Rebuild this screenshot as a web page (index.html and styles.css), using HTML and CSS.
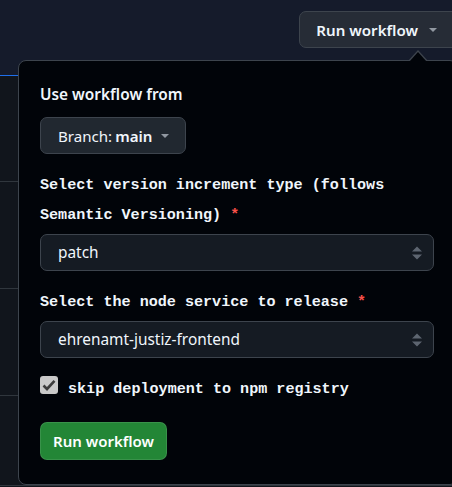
FILE: index.html
```html
<!DOCTYPE html>
<html lang="en">
<head>
<meta charset="utf-8">
<title>Run workflow</title>
<link rel="stylesheet" href="styles.css">
</head>
<body>
<div class="page">
  <header class="topbar">
    <button class="btn-top" type="button">Run workflow<span class="caret"></span></button>
  </header>
  <div class="rows">
    <div class="row r1"></div>
    <div class="row r2"></div>
    <div class="row r3"></div>
    <div class="row r4"></div>
  </div>

  <div class="popover">
    <span class="arrow"></span>
    <div class="title">Use workflow from</div>
    <button class="btn-branch" type="button">Branch:<b>main</b><span class="caret"></span></button>

    <div class="label l1">Select version increment type (follows<br>Semantic Versioning) <span class="req">*</span></div>
    <div class="select">
      <span>patch</span>
      <svg class="updown" width="12" height="14" viewBox="0 0 12 14"><path d="M6 0.5 L11 5.5 H1 Z M6 13.5 L11 8.5 H1 Z" fill="#5d6570"/></svg>
    </div>

    <div class="label l2">Select the node service to release <span class="req">*</span></div>
    <div class="select">
      <span>ehrenamt-justiz-frontend</span>
      <svg class="updown" width="12" height="14" viewBox="0 0 12 14"><path d="M6 0.5 L11 5.5 H1 Z M6 13.5 L11 8.5 H1 Z" fill="#5d6570"/></svg>
    </div>

    <div class="check-row">
      <span class="checkbox"><svg width="14" height="12" viewBox="0 0 14 12"><path d="M1.5 6.5 L5 10 L12.5 1.8" fill="none" stroke="#3b3b3b" stroke-width="2.6"/></svg></span>
      <span class="label">skip deployment to npm registry</span>
    </div>

    <button class="btn-green" type="button">Run workflow</button>
  </div>
</div>
</body>
</html>
```

FILE: styles.css
```css
* { box-sizing: border-box; }
html, body { margin: 0; padding: 0; }
body {
  width: 452px;
  height: 487px;
  overflow: hidden;
  background: #11151c;
  font-family: "Noto Sans", "Open Sans", sans-serif;
  color: #f0f6fc;
}
.page {
  position: relative;
  width: 452px;
  height: 487px;
  overflow: hidden;
}
.topbar {
  height: 76px;
  background: #151b2b;
  border-bottom: 1px solid #1f6feb;
  display: flex;
  justify-content: flex-end;
  align-items: flex-start;
  padding-top: 11px;
}
.btn-top {
  height: 37px;
  margin-right: -8px;
  padding: 0 22px 0 16px;
  background: #262c36;
  border: 1px solid #3d444d;
  border-radius: 7px;
  color: #f0f6fc;
  font-family: inherit;
  font-size: 15.1px;
  font-weight: 600;
  display: flex;
  align-items: center;
}
.caret {
  display: inline-block;
  width: 0;
  height: 0;
  border-left: 4.5px solid transparent;
  border-right: 4.5px solid transparent;
  border-top: 4.5px solid #9198a1;
  margin-left: 11px;
}
.rows { display: flex; flex-direction: column; }
.row { border-bottom: 1px solid #30363d; }
.r1 { height: 106px; }
.r2 { height: 107px; }
.r3 { height: 107px; }
.r4 { height: 90px; }

.popover {
  position: absolute;
  left: 18px;
  top: 60px;
  width: 440px;
  height: 425px;
  background: #010409;
  border: 1px solid #3d444d;
  border-radius: 8px;
  padding: 23px 22px 0 21px;
  display: flex;
  flex-direction: column;
  align-items: flex-start;
}
.arrow {
  position: absolute;
  top: -11px;
  left: 389px;
  width: 0;
  height: 0;
  border-left: 10px solid transparent;
  border-right: 10px solid transparent;
  border-bottom: 11px solid #3d444d;
}
.arrow::after {
  content: "";
  position: absolute;
  left: -9px;
  top: 1.5px;
  border-left: 9px solid transparent;
  border-right: 9px solid transparent;
  border-bottom: 10px solid #010409;
}
.title {
  font-size: 15.4px;
  font-weight: 600;
  line-height: 21px;
}
.btn-branch {
  margin-top: 12px;
  height: 37px;
  padding: 0 16px 0 17px;
  background: #212830;
  border: 1px solid #3d444d;
  border-radius: 7px;
  color: #f0f6fc;
  font-family: inherit;
  font-size: 15.1px;
  font-weight: 400;
  display: flex;
  align-items: center;
}
.btn-branch b { font-weight: 600; margin-left: 3px; }
.btn-branch .caret { margin-left: 9px; }
.label {
  font-family: "Liberation Mono", "DejaVu Sans Mono", monospace;
  font-weight: 700;
  font-size: 15.1px;
  line-height: 30px;
  color: #f0f6fc;
}
.l1 { margin-top: 16px; }
.l2 { margin-top: 16px; }
.req { color: #f85149; }
.select {
  margin-top: 4px;
  width: 394px;
  height: 37px;
  background: #151b23;
  border: 1px solid #3d444d;
  border-radius: 7px;
  display: flex;
  align-items: center;
  justify-content: space-between;
  padding: 0 10px 0 17px;
  font-size: 15.4px;
  color: #f0f6fc;
}
.updown { display: block; }
.check-row {
  margin-top: 16px;
  display: flex;
  align-items: flex-start;
  gap: 10px;
}
.checkbox {
  margin-top: 2px;
  width: 18px;
  height: 18px;
  background: #c9c9c9;
  border-radius: 3px;
  display: flex;
  align-items: center;
  justify-content: center;
}
.btn-green {
  margin-top: 18px;
  height: 38px;
  padding: 0 12px 0 12px;
  background: #238636;
  border: 1px solid rgba(255,255,255,0.1);
  border-radius: 7px;
  color: #ffffff;
  font-family: inherit;
  font-size: 15px;
  font-weight: 600;
}
```
